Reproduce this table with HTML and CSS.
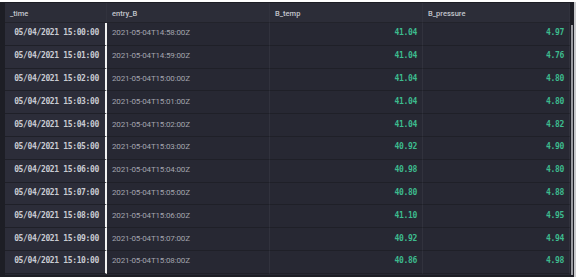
FILE: index.html
```html
<!DOCTYPE html>
<html lang="en">
<head>
    <meta charset="UTF-8">
    <title>Query Results</title>
    <link rel="stylesheet" href="styles.css">
</head>
<body>
    <div class="table-frame">
        <div class="table-scroll">
            <div class="data-table">
                <div class="cell head">_time</div>
                <div class="cell head">entry_B</div>
                <div class="cell head">B_temp</div>
                <div class="cell head">B_pressure</div>

                <div class="cell time">05/04/2021 15:00:00</div>
                <div class="cell text">2021-05-04T14:58:00Z</div>
                <div class="cell num">41.04</div>
                <div class="cell num">4.97</div>

                <div class="cell time">05/04/2021 15:01:00</div>
                <div class="cell text">2021-05-04T14:59:00Z</div>
                <div class="cell num">41.04</div>
                <div class="cell num">4.76</div>

                <div class="cell time">05/04/2021 15:02:00</div>
                <div class="cell text">2021-05-04T15:00:00Z</div>
                <div class="cell num">41.04</div>
                <div class="cell num">4.80</div>

                <div class="cell time">05/04/2021 15:03:00</div>
                <div class="cell text">2021-05-04T15:01:00Z</div>
                <div class="cell num">41.04</div>
                <div class="cell num">4.80</div>

                <div class="cell time">05/04/2021 15:04:00</div>
                <div class="cell text">2021-05-04T15:02:00Z</div>
                <div class="cell num">41.04</div>
                <div class="cell num">4.82</div>

                <div class="cell time">05/04/2021 15:05:00</div>
                <div class="cell text">2021-05-04T15:03:00Z</div>
                <div class="cell num">40.92</div>
                <div class="cell num">4.90</div>

                <div class="cell time">05/04/2021 15:06:00</div>
                <div class="cell text">2021-05-04T15:04:00Z</div>
                <div class="cell num">40.98</div>
                <div class="cell num">4.80</div>

                <div class="cell time">05/04/2021 15:07:00</div>
                <div class="cell text">2021-05-04T15:05:00Z</div>
                <div class="cell num">40.80</div>
                <div class="cell num">4.88</div>

                <div class="cell time">05/04/2021 15:08:00</div>
                <div class="cell text">2021-05-04T15:06:00Z</div>
                <div class="cell num">41.10</div>
                <div class="cell num">4.95</div>

                <div class="cell time">05/04/2021 15:09:00</div>
                <div class="cell text">2021-05-04T15:07:00Z</div>
                <div class="cell num">40.92</div>
                <div class="cell num">4.94</div>

                <div class="cell time">05/04/2021 15:10:00</div>
                <div class="cell text">2021-05-04T15:08:00Z</div>
                <div class="cell num">40.86</div>
                <div class="cell num">4.98</div>
            </div>
            <div class="scrollbar"></div>
        </div>
    </div>
</body>
</html>
```

FILE: styles.css
```css
/* Page */
body {
    margin: 0;
    background: #fff;
    font-family: Roboto, "Liberation Sans", sans-serif;
}

.table-frame {
    margin-top: 2px;
    width: 576px;
    height: 275px;
    background: #1d1e25;
    border-right: 2px solid #c9cacd;
    box-sizing: border-box;
    padding: 1px 0 2px 5px;
}

.table-scroll {
    display: flex;
    height: 100%;
}

/* Grid of cells */
.data-table {
    display: grid;
    grid-template-columns: 102px 163px 153px 147px;
    grid-template-rows: 20px repeat(11, 22.8px);
    background: #272833;
}

.cell {
    display: flex;
    align-items: center;
    box-sizing: border-box;
    padding: 0 5px 2px;
    border-bottom: 1px solid #1f2028;
    border-right: 1px solid #31323d;
    white-space: nowrap;
}

.head {
    background: #2c2d38;
    color: #c3c5cc;
    font-size: 7.5px;
    font-weight: 500;
    padding-top: 4px;
    border-bottom-color: #22232b;
}

.time {
    justify-content: flex-end;
    background: #2c2d39;
    color: #c9cbd2;
    font-family: "DejaVu Sans Mono", monospace;
    font-weight: bold;
    font-size: 8px;
    letter-spacing: -0.35px;
    border-right: 2px solid #f2f2f2;
    padding-right: 6px;
}

.text {
    color: #a3a5ae;
    font-size: 8px;
    letter-spacing: -0.15px;
}

.num {
    justify-content: flex-end;
    color: #3dbb8e;
    font-family: "DejaVu Sans Mono", monospace;
    font-weight: bold;
    font-size: 8px;
    letter-spacing: -0.3px;
}

.scrollbar {
    width: 2px;
    margin: 22px 0 0 1px;
    background: #9a9ba1;
}
```
